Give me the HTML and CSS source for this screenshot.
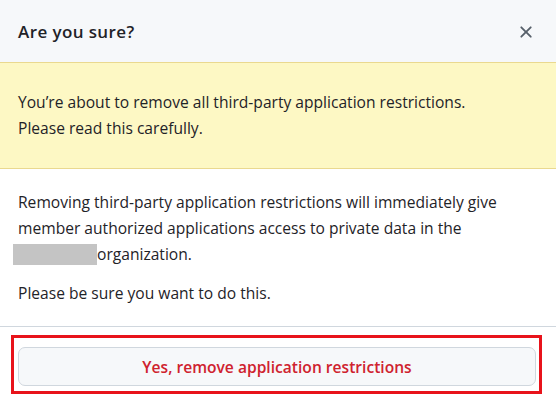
FILE: index.html
```html
<!DOCTYPE html>
<html lang="en">
<head>
<meta charset="utf-8">
<title>Are you sure?</title>
<link rel="stylesheet" href="styles.css">
</head>
<body>
<div class="dialog">
  <div class="dialog-header">
    <h3 class="dialog-title">Are you sure?</h3>
    <button class="close-btn" aria-label="Close">
      <svg width="20" height="20" viewBox="0 0 16 16" aria-hidden="true"><path fill="currentColor" d="M3.72 3.72a.75.75 0 0 1 1.06 0L8 6.94l3.22-3.22a.749.749 0 0 1 1.275.326.749.749 0 0 1-.215.734L9.06 8l3.22 3.22a.749.749 0 0 1-.326 1.275.749.749 0 0 1-.734-.215L8 9.06l-3.22 3.22a.751.751 0 0 1-1.042-.018.751.751 0 0 1-.018-1.042L6.94 8 3.72 4.78a.75.75 0 0 1 0-1.06Z"/></svg>
    </button>
  </div>
  <div class="flash-warn">
    You’re about to remove all third-party application restrictions. Please read this carefully.
  </div>
  <div class="dialog-body">
    <p>Removing third-party application restrictions will immediately give member authorized applications access to private data in the <span class="redacted"></span>organization.</p>
    <p>Please be sure you want to do this.</p>
  </div>
  <div class="dialog-footer">
    <button class="danger-btn">Yes, remove application restrictions</button>
    <div class="highlight"></div>
  </div>
</div>
</body>
</html>
```

FILE: styles.css
```css
* { box-sizing: border-box; }
html, body { margin: 0; padding: 0; background: #ffffff; }
body {
  font-family: "Open Sans", "Noto Sans", sans-serif;
  font-size: 15.6px;
  line-height: 26.25px;
  color: #1f2328;
  width: 556px;
  height: 404px;
  overflow: hidden;
}
.dialog { display: flex; flex-direction: column; }
.dialog-header {
  height: 62px;
  background: #f6f8fa;
  display: flex;
  align-items: center;
  justify-content: space-between;
  padding: 2px 20px 0 18px;
}
.dialog-title {
  margin: 0;
  font-size: 17px;
  letter-spacing: 0.4px;
  font-weight: 600;
  color: #1f2328;
}
.close-btn {
  border: 0;
  background: transparent;
  padding: 0;
  width: 20px;
  height: 20px;
  color: #57606a;
  display: flex;
  align-items: center;
  justify-content: center;
}
.flash-warn {
  background: #fdf8c4;
  border-top: 1px solid #ead98f;
  border-bottom: 1px solid #ead98f;
  padding: 26px 60px 26px 18px;
}
.dialog-body { padding: 20px 20px 20px 18px; }
.dialog-body p { margin: 0 0 12.5px; }
.dialog-body p:last-child { margin-bottom: 0; }
.redacted {
  display: inline-block;
  width: 84px;
  height: 21px;
  background: #c4c4c4;
  vertical-align: -5px;
  margin-left: -5px;
}
.dialog-footer {
  border-top: 1px solid #d0d7de;
  padding: 20px 20px 20px 18px;
  position: relative;
}
.danger-btn {
  display: block;
  width: 100%;
  height: 39px;
  background: #f6f8fa;
  border: 1px solid #d0d7de;
  border-radius: 7px;
  font-family: inherit;
  font-size: 15.6px;
  font-weight: 600;
  color: #cf222e;
}
.highlight {
  position: absolute;
  left: 11px;
  top: 8px;
  width: 531px;
  height: 59px;
  border: 3px solid #e8131b;
  pointer-events: none;
}
```
